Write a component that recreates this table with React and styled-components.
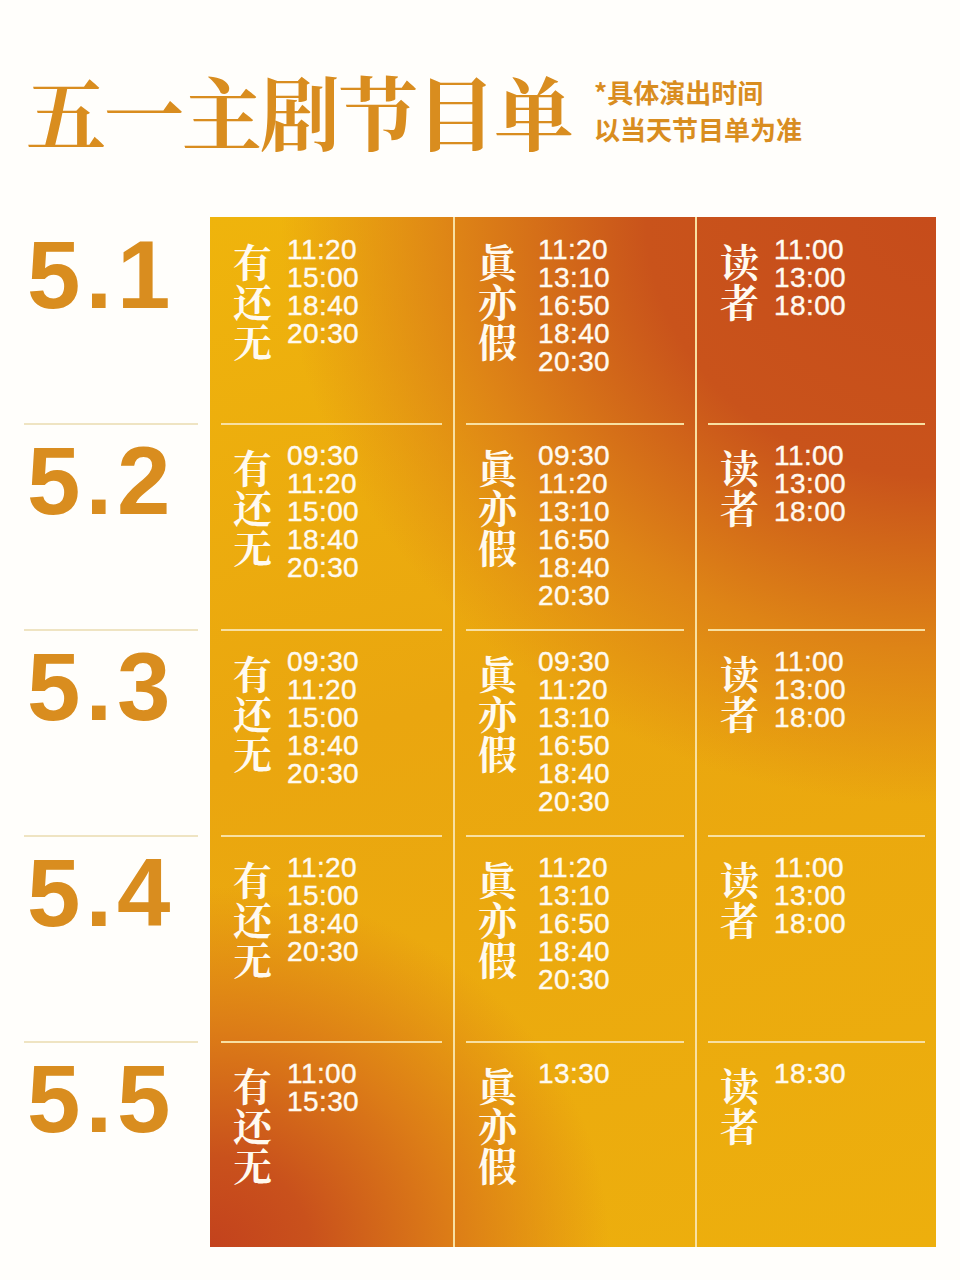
import React from "react";
import styled, { createGlobalStyle } from "styled-components";

const GOLD = "#d98d1f";
const CREAM = "#f8e0a2";

const schedule = [
  {
    date: "5.1",
    shows: [
      ["11:20", "15:00", "18:40", "20:30"],
      ["11:20", "13:10", "16:50", "18:40", "20:30"],
      ["11:00", "13:00", "18:00"],
    ],
  },
  {
    date: "5.2",
    shows: [
      ["09:30", "11:20", "15:00", "18:40", "20:30"],
      ["09:30", "11:20", "13:10", "16:50", "18:40", "20:30"],
      ["11:00", "13:00", "18:00"],
    ],
  },
  {
    date: "5.3",
    shows: [
      ["09:30", "11:20", "15:00", "18:40", "20:30"],
      ["09:30", "11:20", "13:10", "16:50", "18:40", "20:30"],
      ["11:00", "13:00", "18:00"],
    ],
  },
  {
    date: "5.4",
    shows: [
      ["11:20", "15:00", "18:40", "20:30"],
      ["11:20", "13:10", "16:50", "18:40", "20:30"],
      ["11:00", "13:00", "18:00"],
    ],
  },
  {
    date: "5.5",
    shows: [["11:00", "15:30"], ["13:30"], ["18:30"]],
  },
];

const plays = [
  { name: "有还无", gap: 15 },
  { name: "眞亦假", gap: 21 },
  { name: "读者", gap: 15 },
];

function App() {
  return (
    <Page>
      <GlobalStyle />
      <Header>
        <Title>五一主剧节目单</Title>
        <Note>
          <span>*具体演出时间</span>
          <span>以当天节目单为准</span>
        </Note>
      </Header>
      <Body>
        <Dates>
          {schedule.map((day, i) => (
            <DateRow key={day.date} $first={i === 0}>
              {day.date}
            </DateRow>
          ))}
        </Dates>
        <Panel>
          {schedule.map((day, r) =>
            day.shows.map((times, c) => (
              <Cell key={day.date + c} $col={c}>
                <Rule $hidden={r === 0} />
                <CellBody>
                  <PlayName>
                    {plays[c].name.split("").map((ch, k) => (
                      <span key={k}>{ch}</span>
                    ))}
                  </PlayName>
                  <Times $gap={plays[c].gap}>
                    {times.map((t) => (
                      <span key={t}>{t}</span>
                    ))}
                  </Times>
                </CellBody>
              </Cell>
            ))
          )}
        </Panel>
      </Body>
    </Page>
  );
}

export default App;

const GlobalStyle = createGlobalStyle`
  html, body {
    margin: 0;
    padding: 0;
    background: #fff;
  }
  body {
    font-family: "Liberation Sans", Arial, sans-serif;
  }
`;

const Page = styled.div`
  width: 960px;
  height: 1280px;
  box-sizing: border-box;
  padding: 62px 24px 0 24px;
  background: #fffefb;
  overflow: hidden;
`;

const Header = styled.div`
  display: flex;
  align-items: center;
`;

const Title = styled.h1`
  margin: 0 0 0 2px;
  font-family: "Noto Serif CJK SC", "Noto Sans CJK SC", serif;
  font-weight: 700;
  font-size: 80px;
  line-height: 96px;
  letter-spacing: -2px;
  color: ${GOLD};
`;

const Note = styled.div`
  display: flex;
  flex-direction: column;
  margin-left: 22px;
  font-family: "Noto Sans CJK SC", sans-serif;
  font-weight: 700;
  font-size: 26px;
  line-height: 37px;
  color: ${GOLD};
`;

const Body = styled.div`
  display: flex;
  gap: 12px;
  margin-top: 59px;
`;

const Dates = styled.div`
  width: 174px;
  display: flex;
  flex-direction: column;
`;

const DateRow = styled.div`
  height: 206px;
  box-sizing: border-box;
  border-top: 2px solid ${(p) => (p.$first ? "transparent" : "#efe4c2")};
  padding: 8px 0 0 3px;
  font-family: "Liberation Sans", Arial, sans-serif;
  font-weight: 700;
  font-size: 96px;
  line-height: 1;
  letter-spacing: 5px;
  color: ${GOLD};
`;

const Panel = styled.div`
  width: 726px;
  display: grid;
  grid-template-columns: 243px 242px 241px;
  grid-auto-rows: 206px;
  background:
    radial-gradient(ellipse 95% 60% at 100% 0%, #c64c1b 0%, #c9531b 42%, #de8416 70%, rgba(236, 171, 14, 0) 95%),
    radial-gradient(ellipse 55% 35% at 0% 100%, #c3421d 0%, #c9511c 25%, #dc7c17 60%, rgba(236, 171, 14, 0) 100%),
    linear-gradient(165deg, #efb40c 0%, #eaa60f 45%, #edaf0d 100%);
`;

const Cell = styled.div`
  display: flex;
  flex-direction: column;
  box-sizing: border-box;
  border-left: ${(p) => (p.$col === 0 ? "0" : `2px solid ${CREAM}`)};
  color: #fffaf0;
`;

const Rule = styled.div`
  height: 2px;
  margin: 0 11px;
  background: ${(p) => (p.$hidden ? "transparent" : CREAM)};
`;

const CellBody = styled.div`
  display: flex;
  align-items: flex-start;
  padding: 17px 0 0 23px;
`;

const PlayName = styled.div`
  display: flex;
  flex-direction: column;
  margin-top: 4px;
  font-family: "Noto Serif CJK SC", "Noto Sans CJK SC", serif;
  font-weight: 700;
  font-size: 39px;
  line-height: 40px;
`;

const Times = styled.div`
  display: flex;
  flex-direction: column;
  margin-left: ${(p) => p.$gap}px;
  font-family: "Liberation Sans", Arial, sans-serif;
  font-size: 28px;
  line-height: 28px;
  letter-spacing: 0.4px;
  -webkit-text-stroke: 0.4px #fffaf0;
`;
